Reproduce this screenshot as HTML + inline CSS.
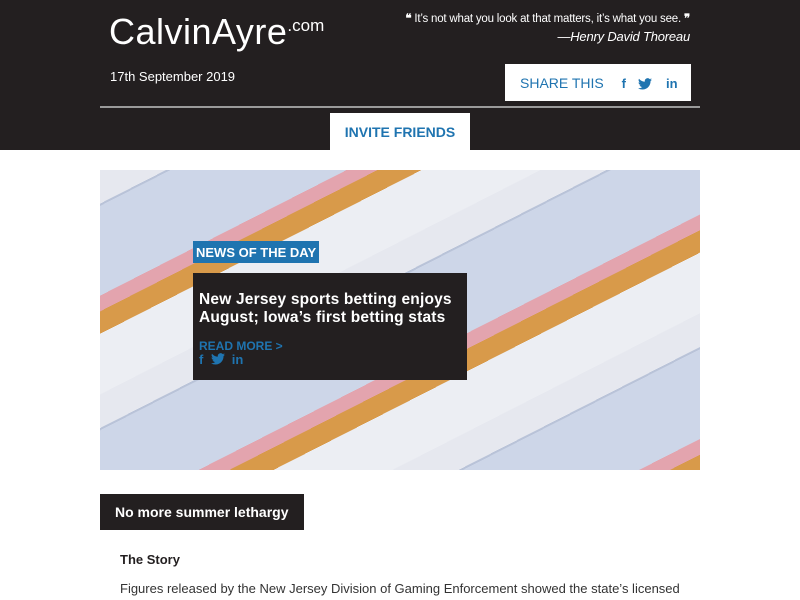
<!DOCTYPE html>
<html><head><meta charset="utf-8"><style>
*{margin:0;padding:0;box-sizing:border-box}
body{width:800px;height:600px;overflow:hidden;background:#fff;font-family:"Liberation Sans",Arial,sans-serif}
#hdr{background:#231f20;height:150px;position:relative}
.logo{position:absolute;left:109px;top:11px;color:#fff;font-size:36px;letter-spacing:0.5px}
.logo small{font-size:17px;vertical-align:13px;letter-spacing:0}
.quote{position:absolute;right:110px;top:10px;color:#fff;font-size:11.5px;text-align:right;line-height:18px;letter-spacing:-0.2px}
.quote i{font-size:13px}
.date{position:absolute;left:110px;top:69px;color:#fff;font-size:13px}
.share{position:absolute;left:505px;top:64px;width:186px;height:37px;background:#fff;color:#1f74b0;font-size:14px;padding:11px 0 0 15px}
.share b{margin-left:14px;font-size:13px}
.share svg{margin-left:12px;vertical-align:-2px}
.line{position:absolute;left:100px;right:100px;top:106px;height:2px;background:#9a9a9a}
.inv{position:absolute;left:330px;top:113px;width:140px;height:37px;background:#fff;color:#1f74b0;font-weight:bold;font-size:14px;text-align:center;padding-top:11px}
#img{position:absolute;left:100px;top:170px;width:600px;height:300px;
background:repeating-linear-gradient(153deg,#e6e8ef 0 30px,#b9c3d8 30px 32px,#cdd6e8 32px 112px,#e3a4ae 112px 126px,#d89a4a 126px 146px,#eceef3 146px 200px)}
.nod{position:absolute;left:193px;top:241px;background:#1f74b0;color:#fff;font-weight:bold;font-size:13px;padding:4px 3px 4px 3px;height:22px}
.box{position:absolute;left:193px;top:273px;width:274px;height:107px;background:#231f20;padding:18px 5px 0 6px}
.box h2{color:#fff;font-size:15.5px;line-height:18px;font-weight:bold;letter-spacing:0.2px}
.box .rm{color:#1f74b0;font-weight:bold;font-size:12px;margin-top:12px}
.box .ic{color:#1f74b0;font-weight:bold;font-size:13px;line-height:14px}
.box .ic svg{vertical-align:-1px}
.tag{position:absolute;left:100px;top:494px;width:204px;height:36px;background:#231f20;color:#fff;font-weight:bold;font-size:14px;padding:10px 0 0 15px}
.st{position:absolute;left:120px;top:552px;font-size:13px;color:#231f20;font-weight:bold}
.p{position:absolute;left:120px;top:581px;font-size:13px;color:#333}
</style></head><body>
<div id="hdr">
<div class="logo">CalvinAyre<small>.com</small></div>
<div class="quote"><b>❝</b> It’s not what you look at that matters, it’s what you see. <b>❞</b><br><i>—Henry David Thoreau</i></div>
<div class="date">17th September 2019</div>
<div class="share">SHARE THIS <b>f</b><svg width="14" height="12" viewBox="0 0 24 20"><path fill="#1f74b0" d="M24 2.4a10 10 0 0 1-2.8.8A5 5 0 0 0 23.3.4a10 10 0 0 1-3.1 1.2A4.9 4.9 0 0 0 11.8 6 14 14 0 0 1 1.7.9a4.9 4.9 0 0 0 1.5 6.6A4.9 4.9 0 0 1 1 6.9a4.9 4.9 0 0 0 3.9 4.8 5 5 0 0 1-2.2.1 4.9 4.9 0 0 0 4.6 3.4A9.9 9.9 0 0 1 0 17.3 14 14 0 0 0 7.5 19.5c9.1 0 14-7.5 14-14v-.6A10 10 0 0 0 24 2.4z"/></svg><b>in</b></div>
<div class="line"></div>
<div class="inv">INVITE FRIENDS</div>
</div>
<div id="img"></div>
<div class="nod">NEWS OF THE DAY</div>
<div class="box"><h2>New Jersey sports betting enjoys August; Iowa’s first betting stats</h2>
<div class="rm">READ MORE &gt;</div><div class="ic">f &nbsp;<svg width="14" height="12" viewBox="0 0 24 20"><path fill="#1f74b0" d="M24 2.4a10 10 0 0 1-2.8.8A5 5 0 0 0 23.3.4a10 10 0 0 1-3.1 1.2A4.9 4.9 0 0 0 11.8 6 14 14 0 0 1 1.7.9a4.9 4.9 0 0 0 1.5 6.6A4.9 4.9 0 0 1 1 6.9a4.9 4.9 0 0 0 3.9 4.8 5 5 0 0 1-2.2.1 4.9 4.9 0 0 0 4.6 3.4A9.9 9.9 0 0 1 0 17.3 14 14 0 0 0 7.5 19.5c9.1 0 14-7.5 14-14v-.6A10 10 0 0 0 24 2.4z"/></svg> &nbsp;in</div></div>
<div class="tag">No more summer lethargy</div>
<div class="st">The Story</div>
<div class="p">Figures released by the New Jersey Division of Gaming Enforcement showed the state’s licensed</div>
</body></html>
